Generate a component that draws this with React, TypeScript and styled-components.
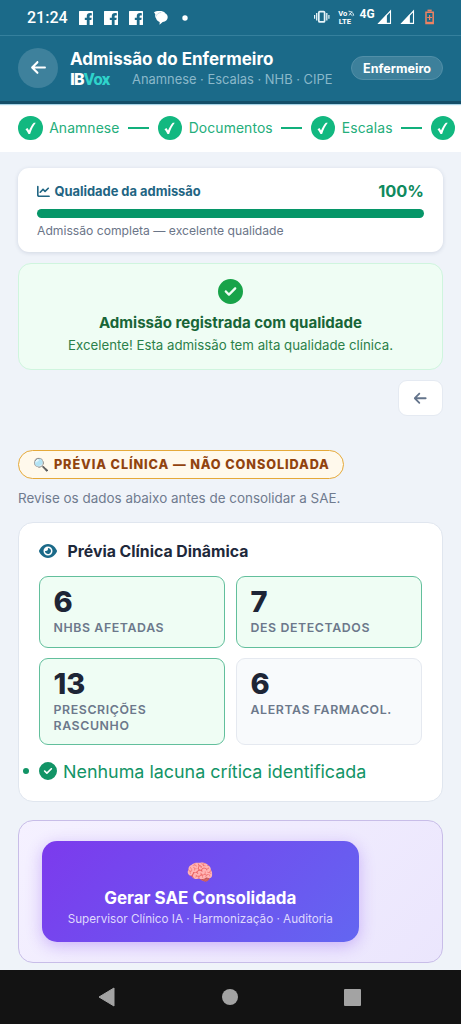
import React from "react";
import styled, { createGlobalStyle } from "styled-components";
import { FaArrowLeft, FaChartLine, FaCircleCheck, FaEye } from "react-icons/fa6";

const GlobalStyle = createGlobalStyle`
  * { box-sizing: border-box; }
  body { margin: 0; background: #eff3f9; font-family: Inter, "Liberation Sans", sans-serif; }
`;

const Screen = styled.div`
  width: 461px;
  height: 1024px;
  display: flex;
  flex-direction: column;
  overflow: hidden;
  background: #eff3f9;
  white-space: nowrap;
`;

const StatusBar = styled.div`
  height: 36px;
  flex: none;
  display: flex;
  justify-content: space-between;
  background: #1b6a89;
  border-bottom: 1px solid #35809d;
  color: #fff;
  padding: 0 25px 0 27px;
  font-family: Roboto, sans-serif;
`;

const StatusLeft = styled.div`
  display: flex;
  align-items: center;
`;

const Clock = styled.span`
  width: 52px;
  font-size: 16px;
  font-weight: 500;
  line-height: 36px;
`;

const StatusSlot = styled.span<{ $w: number }>`
  display: flex;
  width: ${(p) => p.$w}px;
`;

const Header = styled.header`
  height: 68px;
  flex: none;
  display: flex;
  align-items: center;
  padding: 0 18px;
  background: #1b6a89;
  border-bottom: 3px solid #154f69;
  box-shadow: 0 1px 1px #a8d4e7;
  color: #fff;
  position: relative;
`;

const BackCircle = styled.button`
  width: 40px;
  height: 40px;
  margin-bottom: 2px;
  border: 0;
  border-radius: 50%;
  padding: 0;
  display: grid;
  place-items: center;
  background: #3e819c;
  color: #fff;
  font-size: 17px;
`;

const HeaderText = styled.div`
  flex: 1;
  margin-left: 12px;
`;

const HeaderTitle = styled.h1`
  margin: 0;
  font-size: 17px;
  line-height: 21px;
  font-weight: 700;
`;

const HeaderSub = styled.div`
  display: flex;
  align-items: center;
  height: 19px;
`;

const Brand = styled.span`
  width: 62px;
  font-family: Roboto, sans-serif;
  font-size: 16.5px;
  line-height: 19px;
  font-weight: 900;
  letter-spacing: -0.9px;
  em { font-style: normal; color: #2fd3cb; font-weight: 800; }
`;

const Trail = styled.span`
  font-size: 12.9px;
  color: #8ab8ca;
`;

const RoleBadge = styled.span`
  height: 24px;
  margin-bottom: 2px;
  padding: 0 11px;
  border: 1px solid #528fa8;
  border-radius: 12px;
  background: #3d809b;
  font-size: 12.6px;
  font-weight: 700;
  line-height: 23px;
`;

const Stepper = styled.nav`
  height: 48px;
  flex: none;
  display: flex;
  align-items: center;
  padding-left: 18px;
  background: #fff;
  overflow: hidden;
`;

const StepDot = styled.span`
  width: 24.6px;
  height: 24.6px;
  flex: none;
  border-radius: 50%;
  display: grid;
  place-items: center;
  background: #12b880;
`;

const StepLabel = styled.span<{ $w: number }>`
  width: ${(p) => p.$w}px;
  flex: none;
  margin-left: 6.6px;
  font-size: 13.9px;
  letter-spacing: 0.1px;
  color: #24ae7b;
`;

const StepLine = styled.span`
  width: 21px;
  height: 2px;
  flex: none;
  margin: 0 8.7px;
  background: #12b07c;
`;

const Content = styled.main`
  flex: 1;
  display: flex;
  flex-direction: column;
  padding: 16px 18px 7px;
  overflow: hidden;
`;

const QualityCard = styled.section`
  height: 84px;
  flex: none;
  padding: 13px 19px 0;
  border-radius: 11px;
  background: #fff;
  box-shadow: 0 1px 4px rgba(30, 50, 90, 0.14);
`;

const QualityHead = styled.div`
  height: 20px;
  display: flex;
  align-items: center;
  justify-content: space-between;
`;

const QualityTitle = styled.span`
  display: flex;
  align-items: center;
  gap: 4.5px;
  color: #1f6583;
  font-size: 12.9px;
  font-weight: 700;
`;

const Percent = styled.span`
  font-size: 16.4px;
  font-weight: 700;
  color: #0f8a5e;
`;

const Meter = styled.div`
  height: 9px;
  margin-top: 7.5px;
  border-radius: 5px;
  background: #069668;
`;

const QualityNote = styled.div`
  margin-top: 4.5px;
  font-size: 12.15px;
  line-height: 17px;
  color: #6b7588;
`;

const SuccessCard = styled.section`
  height: 107px;
  flex: none;
  margin-top: 11px;
  padding-top: 15px;
  display: flex;
  flex-direction: column;
  align-items: center;
  border: 1px solid #cff5de;
  border-radius: 13px;
  background: #effdf4;
  color: #18a349;
`;

const SuccessTitle = styled.div`
  margin-top: 9px;
  font-size: 15.05px;
  line-height: 20px;
  font-weight: 700;
  color: #186537;
`;

const SuccessText = styled.div`
  margin-top: 2px;
  font-size: 13.25px;
  line-height: 20px;
  color: #2b8049;
`;

const BackButton = styled.button`
  width: 45px;
  height: 36px;
  flex: none;
  align-self: flex-end;
  margin-top: 10px;
  padding: 0;
  display: grid;
  place-items: center;
  border: 1px solid #e5eaf2;
  border-radius: 9px;
  background: #fff;
  color: #64748b;
  font-size: 14.5px;
`;

const PreviewBadge = styled.div`
  width: 326px;
  height: 29px;
  flex: none;
  margin-top: 34px;
  padding-left: 14px;
  display: flex;
  align-items: center;
  gap: 4px;
  border: 1.5px solid #e5a93a;
  border-radius: 15px;
  background: #fff9ec;
  color: #91430f;
  font-size: 12.7px;
  font-weight: 800;
  letter-spacing: 0.9px;
`;

const PreviewHint = styled.p`
  margin: 9px 0 0;
  font-size: 13.45px;
  line-height: 20px;
  color: #6f7b8f;
`;

const PreviewCard = styled.section`
  height: 280px;
  flex: none;
  margin-top: 14px;
  padding: 18px 20px 0;
  border: 1px solid #e0e6ef;
  border-radius: 15px;
  background: #fff;
`;

const PreviewTitle = styled.h2`
  margin: 0;
  height: 20px;
  display: flex;
  align-items: center;
  gap: 10.5px;
  font-size: 15.8px;
  font-weight: 700;
  color: #1e293b;
  svg { color: #1b6a89; }
`;

const Tiles = styled.div`
  display: grid;
  grid-template-columns: 186px 186px;
  grid-template-rows: 72px 87px;
  gap: 10px 11px;
  margin-top: 15px;
`;

const Tile = styled.div<{ $plain?: boolean }>`
  padding: 8px 13.5px 0;
  border: 1px solid ${(p) => (p.$plain ? "#e5e9f0" : "#62bf9c")};
  border-radius: 9px;
  background: ${(p) => (p.$plain ? "#f8fafc" : "#effdf4")};
`;

const TileValue = styled.div`
  font-size: 29px;
  line-height: 34px;
  font-weight: 800;
  color: #1e2536;
`;

const TileLabel = styled.div`
  font-size: 12.35px;
  line-height: 15.5px;
  font-weight: 600;
  letter-spacing: 0.6px;
  color: #6c788b;
  margin-top: 1px;
  white-space: normal;
`;

const GapList = styled.ul`
  margin: 13px 0 0 -16px;
  padding: 0;
  list-style: none;
`;

const GapItem = styled.li`
  display: flex;
  align-items: center;
  height: 26px;
  font-size: 17.9px;
  color: #129466;
  &::before {
    content: "";
    width: 6px;
    height: 6px;
    margin-right: 10px;
    border-radius: 50%;
    background: currentColor;
  }
  svg { margin-right: 6px; }
`;

const ActionPanel = styled.section`
  height: 143px;
  flex: none;
  margin-top: 18px;
  padding: 20px 22.5px;
  border: 1px solid #c8bde8;
  border-radius: 15px;
  background: linear-gradient(135deg, #f5f1ff, #ebe6fd);
`;

const GenerateButton = styled.button`
  width: 317.5px;
  height: 101px;
  padding: 17px 0 0;
  display: flex;
  flex-direction: column;
  align-items: center;
  border: 0;
  border-radius: 15px;
  background: linear-gradient(135deg, #7c3aed, #6366f1);
  box-shadow: 0 4px 16px rgba(124, 58, 237, 0.32);
  color: #fff;
  font-family: inherit;
`;

const Brain = styled.span`
  font-size: 22.4px;
  line-height: 27px;
`;

const GenerateTitle = styled.span`
  margin-top: 2px;
  font-size: 17px;
  line-height: 22px;
  font-weight: 700;
`;

const GenerateNote = styled.span`
  margin-top: 2px;
  font-size: 11.7px;
  line-height: 16px;
  color: #dfd8fd;
`;

const NavBar = styled.footer`
  height: 54px;
  flex: none;
  display: flex;
  align-items: center;
  justify-content: space-between;
  padding: 0 100px 0 98px;
  background: #131313;
`;

const FacebookGlyph = () => (
  <svg width="14" height="14" viewBox="0 0 14 14">
    <path fill="#fff" fillRule="evenodd" d="M.6 0h12.8q.6 0 .6.6v12.8q0 .6-.6.6H10.6V9h1.7l.4-2.3h-2.1V5.5c0-.8.4-1.1 1.2-1.1h1V2.2c-.4-.1-1-.2-1.7-.2C9 2 7.8 3.1 7.8 5v1.7H5.8V9h2v5H.6q-.6 0-.6-.6V.6Q0 0 .6 0Z" />
  </svg>
);

const ChatGlyph = () => (
  <svg width="14" height="14" viewBox="0 0 14 14" fill="#fff">
    <path d="M0 1.2C1 .5 3 .1 5.5.1c2.600 0 4.500.6 5.500 1.500L2.200 7.400C1.100 6.300.9 4.800 1.300 3.200Z" />
    <path d="M7.800 1.500c3.400 0 5.900 1.900 5.900 4.800 0 2.700-2.100 4.500-5 4.800L5.500 13.700l.2-2.800C3.500 10.300 2 8.600 2 6.400 2 3.500 4.500 1.500 7.800 1.500Z" />
    <path d="M1.900 5.600C2.500 3.200 4.500 1.700 7.300 1.400" fill="none" stroke="#8db9cb" strokeWidth=".5" />
  </svg>
);

const SystemIcons = () => (
  <svg width="124" height="36" viewBox="312 0 124 36">
    <g fill="none" stroke="#e8f5fa">
      <rect x="318.8" y="11.7" width="5.8" height="10.2" rx="1" strokeWidth="1.7" />
      <path d="M316.7 13v7.6M326.8 13v7.6" strokeWidth="1.3" />
      <path d="M314.6 15v3.8M328.9 15v3.8" strokeWidth="1.2" />
    </g>
    <g fill="#fff" fontFamily="Roboto">
      <text x="338.3" y="15.8" fontSize="7.6" fontWeight="700">Vo</text>
      <text x="338.7" y="24" fontSize="7.7" fontWeight="700">LTE</text>
      <text x="359.5" y="17.8" fontSize="12" fontWeight="700">4G</text>
    </g>
    <path d="M348.5 11.2c3 0 5 1.8 5.2 4.5M349.5 13.2l3 2.6M349 15.5l3-4" fill="none" stroke="#dcecf2" strokeWidth="1" />
    {[377.5, 400.5].map((x) => (
      <g key={x}>
        <path d={`M${x + 1.4} 23.4L${x + 13} 11v12.4Z`} fill="none" stroke="#fff" strokeWidth="1.1" />
        <path d={`M${x} 24l9.4-9.8V24Z`} fill="#fff" />
      </g>
    ))}
    <g fill="none" stroke="#ef8262">
      <path d="M426 12.2h7.2v11.2H426Z" strokeWidth="1.5" />
      <path d="M427.5 10.5h4.2" strokeWidth="1.8" />
      <path d="M429.6 15v5M427.2 17.5h4.8" strokeWidth="1.2" />
      <path d="M426 22.7h7" strokeWidth="1.8" />
    </g>
  </svg>
);

const steps = [
  { label: "Anamnese", width: 70 },
  { label: "Documentos", width: 83.5 },
  { label: "Escalas", width: 50.4 },
];

const tiles = [
  { value: "6", label: "NHBS AFETADAS" },
  { value: "7", label: "DES DETECTADOS" },
  { value: "13", label: "PRESCRIÇÕES RASCUNHO" },
  { value: "6", label: "ALERTAS FARMACOL.", plain: true },
];

const CheckDot = () => (
  <StepDot>
    <svg width="13" height="13" viewBox="0 0 13 13">
      <path d="M1.5 7.2L3.5 6.1 5 8.5C6.4 5.4 7.9 2.8 9.8.8h2C9.3 4 7.6 7.5 6.1 12H4.5C3.7 10.2 2.6 8.5 1.5 7.2Z" fill="#fff" />
    </svg>
  </StepDot>
);

export default function App() {
  return (
    <Screen>
      <GlobalStyle />
      <StatusBar>
        <StatusLeft>
          <Clock>21:24</Clock>
          <StatusSlot $w={25}><FacebookGlyph /></StatusSlot>
          <StatusSlot $w={25}><FacebookGlyph /></StatusSlot>
          <StatusSlot $w={25}><FacebookGlyph /></StatusSlot>
          <StatusSlot $w={28}><ChatGlyph /></StatusSlot>
          <svg width="6" height="6"><circle cx="3" cy="3" r="2.7" fill="#fff" /></svg>
        </StatusLeft>
        <SystemIcons />
      </StatusBar>
      <Header>
        <BackCircle aria-label="Voltar"><FaArrowLeft /></BackCircle>
        <HeaderText>
          <HeaderTitle>Admissão do Enfermeiro</HeaderTitle>
          <HeaderSub>
            <Brand>IB<em>Vox</em></Brand>
            <Trail>Anamnese · Escalas · NHB · CIPE</Trail>
          </HeaderSub>
        </HeaderText>
        <RoleBadge>Enfermeiro</RoleBadge>
      </Header>
      <Stepper>
        {steps.map((s) => (
          <React.Fragment key={s.label}>
            <CheckDot />
            <StepLabel $w={s.width}>{s.label}</StepLabel>
            <StepLine />
          </React.Fragment>
        ))}
        <CheckDot />
      </Stepper>
      <Content>
        <QualityCard>
          <QualityHead>
            <QualityTitle><FaChartLine />Qualidade da admissão</QualityTitle>
            <Percent>100%</Percent>
          </QualityHead>
          <Meter />
          <QualityNote>Admissão completa — excelente qualidade</QualityNote>
        </QualityCard>
        <SuccessCard>
          <FaCircleCheck size={25} />
          <SuccessTitle>Admissão registrada com qualidade</SuccessTitle>
          <SuccessText>Excelente! Esta admissão tem alta qualidade clínica.</SuccessText>
        </SuccessCard>
        <BackButton aria-label="Voltar"><FaArrowLeft /></BackButton>
        <PreviewBadge><span>🔍</span>PRÉVIA CLÍNICA — NÃO CONSOLIDADA</PreviewBadge>
        <PreviewHint>Revise os dados abaixo antes de consolidar a SAE.</PreviewHint>
        <PreviewCard>
          <PreviewTitle><FaEye size={18} />Prévia Clínica Dinâmica</PreviewTitle>
          <Tiles>
            {tiles.map((t) => (
              <Tile key={t.label} $plain={t.plain}>
                <TileValue>{t.value}</TileValue>
                <TileLabel>{t.label}</TileLabel>
              </Tile>
            ))}
          </Tiles>
          <GapList>
            <GapItem><FaCircleCheck size={18} />Nenhuma lacuna crítica identificada</GapItem>
          </GapList>
        </PreviewCard>
        <ActionPanel>
          <GenerateButton>
            <Brain>🧠</Brain>
            <GenerateTitle>Gerar SAE Consolidada</GenerateTitle>
            <GenerateNote>Supervisor Clínico IA · Harmonização · Auditoria</GenerateNote>
          </GenerateButton>
        </ActionPanel>
      </Content>
      <NavBar>
        <svg width="17" height="20" viewBox="0 0 17 20"><path d="M1 10L16 1v18Z" fill="#a3a3a3" stroke="#a3a3a3" strokeLinejoin="round" /></svg>
        <svg width="17" height="16" viewBox="0 0 17 16"><circle cx="9" cy="8" r="8" fill="#a3a3a3" /></svg>
        <svg width="17" height="17"><rect width="17" height="17" rx="1" fill="#a3a3a3" /></svg>
      </NavBar>
    </Screen>
  );
}
